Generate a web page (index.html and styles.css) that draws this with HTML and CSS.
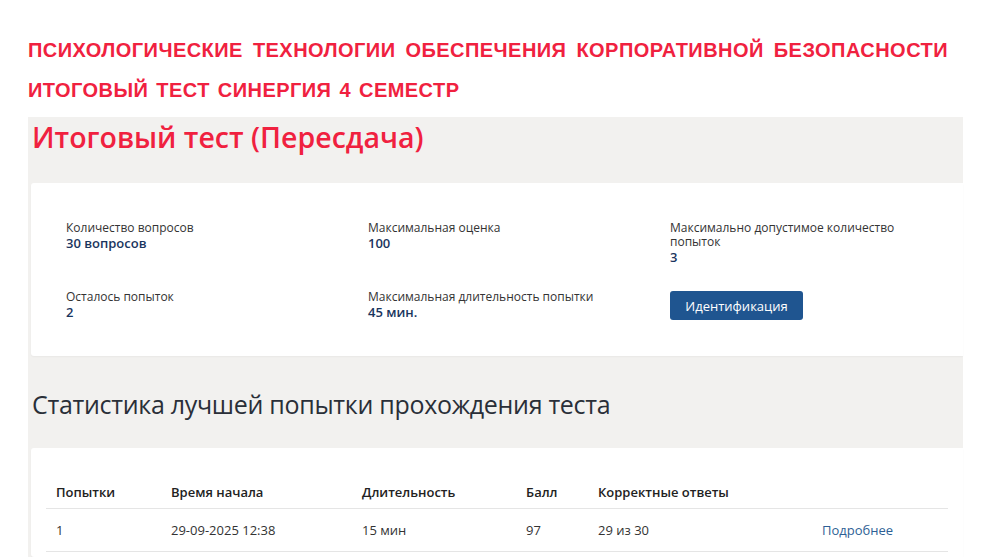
FILE: index.html
```html
<!DOCTYPE html>
<html lang="ru">
<head>
<meta charset="utf-8">
<title>Итоговый тест</title>
<link rel="stylesheet" href="styles.css">
</head>
<body>
<div class="page">
  <header class="banner">
    <div class="banner-line banner-line--wide">ПСИХОЛОГИЧЕСКИЕ ТЕХНОЛОГИИ ОБЕСПЕЧЕНИЯ КОРПОРАТИВНОЙ БЕЗОПАСНОСТИ</div>
    <div class="banner-line">ИТОГОВЫЙ ТЕСТ СИНЕРГИЯ 4 СЕМЕСТР</div>
  </header>
  <main class="panel">
    <h1 class="title">Итоговый тест (Пересдача)</h1>
    <section class="card info-card">
      <div class="info-grid">
        <div class="info-item">
          <div class="info-label">Количество вопросов</div>
          <div class="info-value">30 вопросов</div>
        </div>
        <div class="info-item">
          <div class="info-label">Максимальная оценка</div>
          <div class="info-value">100</div>
        </div>
        <div class="info-item">
          <div class="info-label">Максимально допустимое количество попыток</div>
          <div class="info-value">3</div>
        </div>
        <div class="info-item">
          <div class="info-label">Осталось попыток</div>
          <div class="info-value">2</div>
        </div>
        <div class="info-item">
          <div class="info-label">Максимальная длительность попытки</div>
          <div class="info-value">45 мин.</div>
        </div>
        <div class="info-item">
          <button class="btn" type="button">Идентификация</button>
        </div>
      </div>
    </section>
    <h2 class="subtitle">Статистика лучшей попытки прохождения теста</h2>
    <section class="card table-card">
      <table class="stats">
        <thead>
          <tr>
            <th class="c1">Попытки</th>
            <th class="c2">Время начала</th>
            <th class="c3">Длительность</th>
            <th class="c4">Балл</th>
            <th class="c5">Корректные ответы</th>
            <th class="c6"></th>
          </tr>
        </thead>
        <tbody>
          <tr>
            <td>1</td>
            <td>29-09-2025 12:38</td>
            <td>15 мин</td>
            <td>97</td>
            <td>29 из 30</td>
            <td><a class="more" href="#">Подробнее</a></td>
          </tr>
        </tbody>
      </table>
    </section>
  </main>
</div>
</body>
</html>
```
FILE: styles.css
```css
html, body {
  margin: 0;
  padding: 0;
  background: #ffffff;
}
body {
  font-family: "Open Sans", "Noto Sans", sans-serif;
  color: #333;
  overflow: hidden;
}
.page {
  padding-left: 28px;
  width: 935px;
}
.banner {
  padding-top: 30px;
  height: 117px;
  box-sizing: border-box;
}
.banner-line {
  font-family: "Liberation Sans", Arial, sans-serif;
  font-weight: bold;
  font-size: 20px;
  line-height: 40px;
  letter-spacing: 0.45px;
  word-spacing: 2px;
  color: #f0213f;
  white-space: nowrap;
}
.banner-line--wide {
  word-spacing: 4px;
}
.panel {
  background: #f2f1ef;
  padding: 0 0 0 3px;
}
.title {
  margin: 0;
  padding: 0 0 0 1px;
  height: 66px;
  box-sizing: border-box;
  font-size: 28.5px;
  font-weight: 600;
  color: #f0213f;
  line-height: 40px;
}
.card {
  background: #fff;
  border-radius: 3px 0 0 3px;
  box-shadow: 0 1px 2px rgba(0,0,0,0.04);
}
.info-card {
  height: 173px;
  box-sizing: border-box;
  padding: 38px 0 0 35px;
}
.info-grid {
  display: grid;
  grid-template-columns: 302px 302px 260px;
  row-gap: 14px;
}
.info-item {
  min-height: 55px;
}
.info-label {
  font-size: 12px;
  line-height: 14px;
  color: #333;
}
.info-value {
  font-size: 13px;
  line-height: 17px;
  font-weight: 600;
  color: #1a355e;
}
.btn {
  margin-top: 1px;
  font-family: "Open Sans", "Noto Sans", sans-serif;
  font-size: 13px;
  color: #fff;
  background: #1f5590;
  border: none;
  border-radius: 3px;
  width: 133px;
  height: 29px;
  padding: 0;
}
.subtitle {
  margin: 0;
  height: 92px;
  box-sizing: border-box;
  padding: 28px 0 0 1px;
  font-size: 25px;
  font-weight: 400;
  letter-spacing: -0.3px;
  color: #2a2f38;
  line-height: 40px;
}
.table-card {
  padding: 27px 15px 0 15px;
  height: 109px;
  box-sizing: border-box;
}
.stats {
  width: 902px;
  border-collapse: collapse;
  font-size: 13px;
  color: #333;
}
.stats th {
  text-align: left;
  font-weight: 600;
  height: 33px;
  padding: 0 0 0 10px;
  border-bottom: 1px solid #e5e5e5;
  color: #222;
}
.stats td {
  height: 42px;
  padding: 0 0 0 10px;
  border-bottom: 1px solid #e5e5e5;
}
.c1 { width: 105px; }
.c2 { width: 181px; }
.c3 { width: 154px; }
.c4 { width: 62px; }
.c5 { width: 214px; }
.more {
  color: #2e5f95;
  text-decoration: none;
}
```
